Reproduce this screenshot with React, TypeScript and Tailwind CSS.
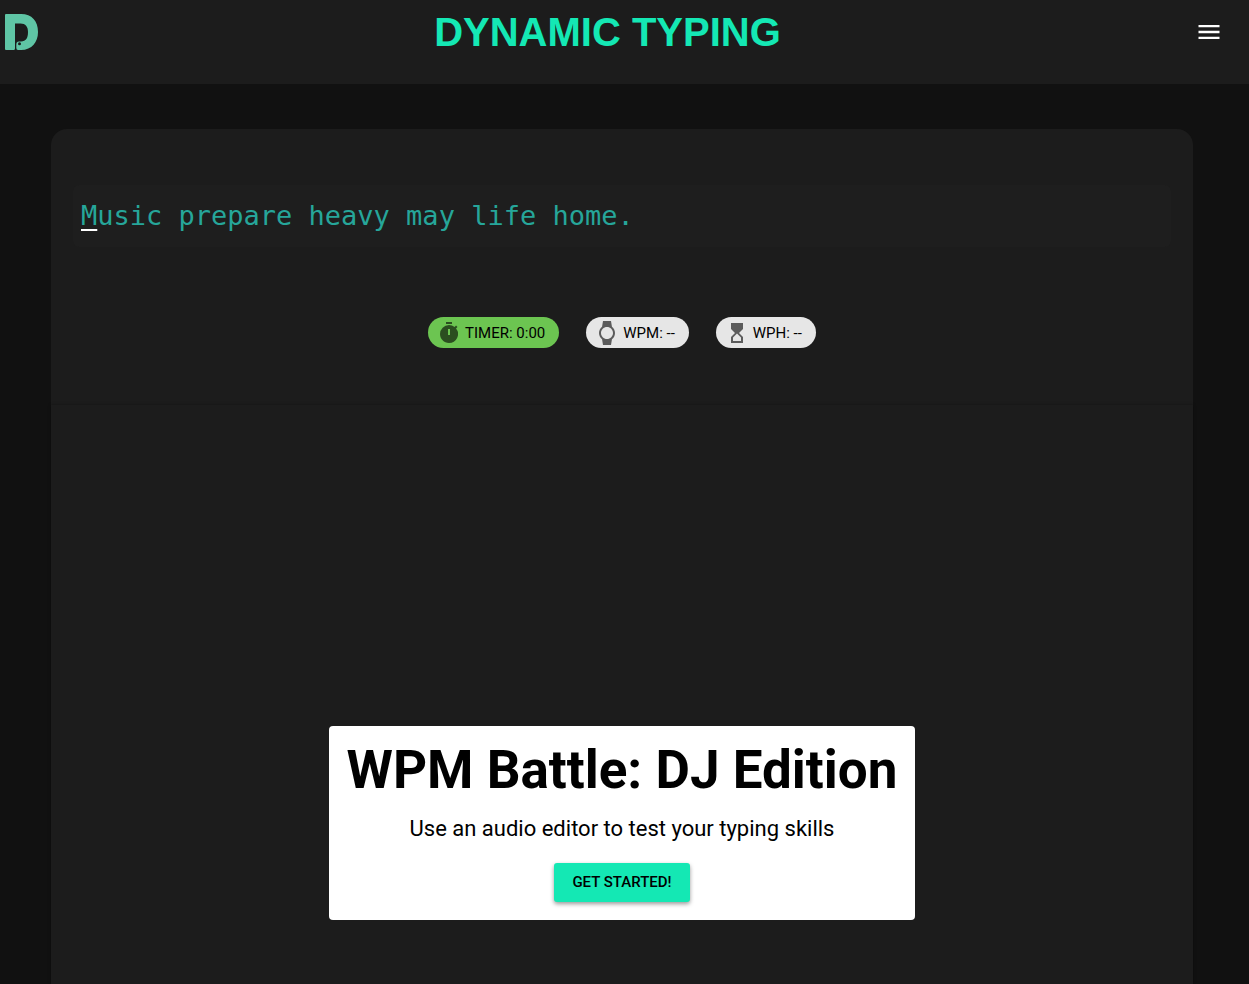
import type { ReactNode } from 'react';
import { MdHourglassTop, MdMenu, MdTimer, MdWatch } from 'react-icons/md';

function Logo() {
  return (
    <svg width="42" height="42" viewBox="0 0 42 42" aria-hidden="true">
      <path
        fill="#5fc5a5"
        d="M6 3H21C32 3 38 10 38 21C38 31 32 39 21 39H18Q16.300 39 16.300 37V33.500Q16.300 30.500 19 30.500H21C26 30.500 28 27 28 21C28 15.500 25.500 12.500 20.500 12.500H15V37.500Q15 39 13.500 39H6Q5 39 5 38V4Q5 3 6 3Z"
      />
      <circle cx="19.500" cy="32.800" r="1.500" fill="#1c1c1c" />
    </svg>
  );
}

function Stat({ icon, children, tone }: { icon: ReactNode; children: ReactNode; tone: string }) {
  return (
    <div className={`flex h-[31px] items-center gap-1 rounded-full pl-[9px] pr-[14px] text-[15px] text-black ${tone}`}>
      <span className="text-2xl opacity-60">{icon}</span>
      <span className="pt-px">{children}</span>
    </div>
  );
}

export default function App() {
  return (
    <div className="flex min-h-screen flex-col bg-[#111111] font-['Roboto',sans-serif]">
      <header className="flex h-[84px] items-start justify-between bg-[#1c1c1c] pr-4">
        <a href="#" aria-label="Home" className="pt-[11px]">
          <Logo />
        </a>
        <h1 className="pt-2 pr-3 font-['Liberation_Sans',sans-serif] text-[40px] leading-[48px] font-bold text-[#14e8b4]">
          DYNAMIC TYPING
        </h1>
        <button type="button" aria-label="Open menu" className="mt-2 p-[10px] text-[28px] text-white">
          <MdMenu />
        </button>
      </header>

      <main className="flex grow flex-col pt-[45px] pr-14 pl-[51px]">
        <section className="rounded-t-2xl bg-[#1c1c1c] px-[22px] pt-14 pb-[57px]">
          <p className="rounded-md bg-[#1e1e1e] px-2 py-[14px] font-['DejaVu_Sans_Mono',monospace] text-[27px] leading-[34px] text-[#26a69a]">
            <span className="underline decoration-white decoration-2 underline-offset-4">M</span>usic prepare heavy may life home.
          </p>
          <div className="mt-[70px] flex flex-wrap justify-center gap-[27px]">
            <Stat icon={<MdTimer />} tone="bg-[#6cc551]">TIMER: 0:00</Stat>
            <Stat icon={<MdWatch />} tone="bg-[#e6e6e6]">WPM: --</Stat>
            <Stat icon={<MdHourglassTop />} tone="bg-[#e6e6e6]">WPH: --</Stat>
          </div>
        </section>

        <section className="flex grow flex-col items-center bg-[#1c1c1c] px-6 pt-[321px] pb-16 shadow-[0_0_3px_rgba(0,0,0,0.35)]">
          <div className="flex flex-col items-center rounded bg-white px-[18px] pt-4 pb-[18px] text-center text-black">
            <h2 className="text-[53px] leading-[56px] font-bold">WPM Battle: DJ Edition</h2>
            <p className="mt-[15px] text-[22px] leading-8">Use an audio editor to test your typing skills</p>
            <button
              type="button"
              className="mt-[18px] h-[39px] rounded-[3px] bg-[#14e8b4] px-[18px] text-[15px] font-medium shadow-[0_2px_4px_rgba(0,0,0,0.4)]"
            >
              GET STARTED!
            </button>
          </div>
        </section>
      </main>
    </div>
  );
}
